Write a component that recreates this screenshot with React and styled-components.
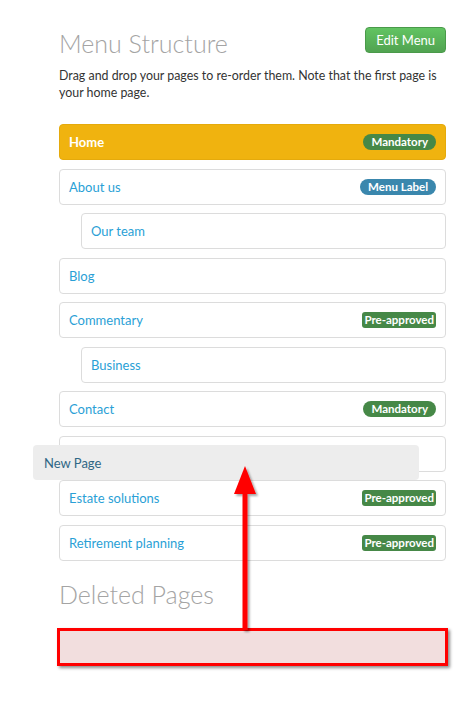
import React from 'react';
import styled, { createGlobalStyle } from 'styled-components';

const GlobalStyle = createGlobalStyle`
  body {
    margin: 0;
    background: #fff;
    font-family: Lato, 'Open Sans', sans-serif;
  }
`;

const Page = styled.div`
  position: relative;
  width: 387px;
  margin-left: 59px;
  padding-top: 27px;
  padding-bottom: 40px;
`;
const Header = styled.div`
  display: flex;
  justify-content: space-between;
  align-items: flex-start;
`;
const Title = styled.h2`
  margin: 0;
  font-size: 25px;
  line-height: 32px;
  font-weight: 300;
  color: #a4a4a4;
`;
const EditButton = styled.button`
  height: 26px;
  padding: 0 10px;
  border: 1px solid #4a9a4a;
  border-radius: 4px;
  background: linear-gradient(#62c462, #51a351);
  color: #fff;
  font-family: inherit;
  font-size: 13px;
  cursor: pointer;
`;
const Intro = styled.p`
  margin: 8px 0 23px;
  font-size: 12.4px;
  line-height: 17px;
  color: #333;
`;
const List = styled.ul`
  list-style: none;
  margin: 0;
  padding: 0;
  display: flex;
  flex-direction: column;
  gap: 8.5px;
`;
const Row = styled.li`
  box-sizing: border-box;
  height: 36px;
  margin-left: ${(p) => (p.$nested ? '22px' : '0')};
  padding: 0 9px;
  display: flex;
  align-items: center;
  justify-content: space-between;
  border: 1px solid ${(p) => (p.$home ? '#e5aa0c' : '#dcdcdc')};
  border-radius: 4px;
  background: ${(p) => (p.$home ? '#f0b30f' : '#fff')};
  color: ${(p) => (p.$home ? '#fff' : '#2a9fd6')};
  font-size: 13px;
  font-weight: ${(p) => (p.$home ? 700 : 400)};
`;
const Badge = styled.span`
  padding: ${(p) => (p.$pill ? '1px 8px 2px' : '1px 2px 2px')};
  border-radius: ${(p) => (p.$pill ? '9px' : '3px')};
  background: ${(p) => p.$color};
  color: #fff;
  font-size: 11.5px;
  font-weight: 700;
  line-height: 13px;
`;
const DragHelper = styled.div`
  position: absolute;
  left: -26px;
  top: 445px;
  box-sizing: border-box;
  width: 386px;
  height: 35px;
  padding: 0 11px;
  display: flex;
  align-items: center;
  border-radius: 4px;
  background: #ededed;
  color: #2f6785;
  font-size: 13px;
`;
const Arrow = styled.svg`
  position: absolute;
  left: 171px;
  top: 462px;
  overflow: visible;
`;
const SubTitle = styled.h2`
  margin: 17px 0 0;
  font-size: 25px;
  line-height: 32px;
  font-weight: 300;
  color: #a4a4a4;
`;
const DropZone = styled.div`
  box-sizing: border-box;
  height: 38px;
  margin: 18px -2px 0;
  border: 3px solid #ff0000;
  background: #f2dede;
  box-shadow: 2px 2px 3px rgba(0, 0, 0, 0.45);
`;

const GREEN = '#468847';
const BLUE = '#3a87ad';

const pages = [
  { name: 'Home', home: true, badge: 'Mandatory', pill: true, color: GREEN },
  { name: 'About us', badge: 'Menu Label', pill: true, color: BLUE },
  { name: 'Our team', nested: true },
  { name: 'Blog' },
  { name: 'Commentary', badge: 'Pre-approved', color: GREEN },
  { name: 'Business', nested: true },
  { name: 'Contact', badge: 'Mandatory', pill: true, color: GREEN },
  { name: '' },
  { name: 'Estate solutions', badge: 'Pre-approved', color: GREEN },
  { name: 'Retirement planning', badge: 'Pre-approved', color: GREEN },
];

export default function App() {
  return (
    <>
      <GlobalStyle />
      <Page>
        <Header>
          <Title>Menu Structure</Title>
          <EditButton>Edit Menu</EditButton>
        </Header>
        <Intro>
          Drag and drop your pages to re-order them. Note that the first page is
          your home page.
        </Intro>
        <List>
          {pages.map((p, i) => (
            <Row key={i} $home={p.home} $nested={p.nested}>
              <span>{p.name}</span>
              {p.badge && (
                <Badge $pill={p.pill} $color={p.color}>
                  {p.badge}
                </Badge>
              )}
            </Row>
          ))}
        </List>
        <SubTitle>Deleted Pages</SubTitle>
        <DropZone />
        <DragHelper>New Page</DragHelper>
        <Arrow width="30" height="170" viewBox="0 0 30 170">
          <defs>
            <filter id="shadow" x="-50%" y="-10%" width="200%" height="120%">
              <feDropShadow dx="2" dy="2" stdDeviation="1.2" floodColor="#000" floodOpacity="0.35" />
            </filter>
          </defs>
          <g filter="url(#shadow)">
            <polygon points="15,4 26,32 4,32" fill="#ff0000" />
            <rect x="12.5" y="30" width="5" height="138" fill="#ff0000" />
          </g>
        </Arrow>
      </Page>
    </>
  );
}
